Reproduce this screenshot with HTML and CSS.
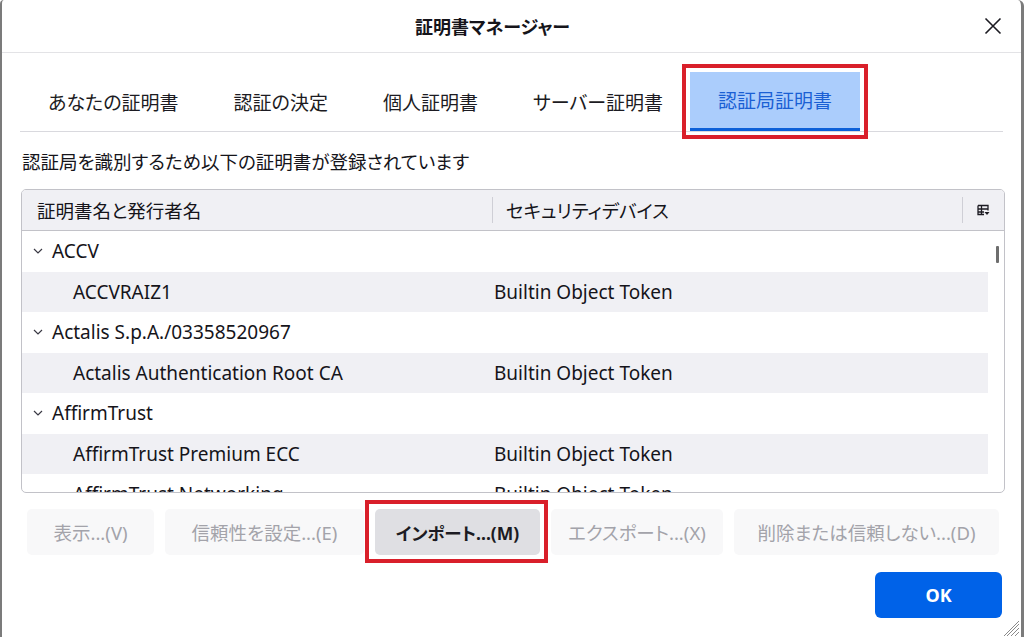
FILE: index.html
```html
<!DOCTYPE html>
<html lang="ja">
<head>
<meta charset="utf-8">
<title>証明書マネージャー</title>
<link rel="stylesheet" href="styles.css">
</head>
<body>
<div class="dialog">
  <header class="titlebar">
    <h1 class="title">証明書マネージャー</h1>
    <button class="close" aria-label="閉じる">
      <svg width="18" height="18" viewBox="0 0 18 18"><path d="M1.5 1.5 L16.5 16.5 M16.5 1.5 L1.5 16.5" stroke="#1c1b22" stroke-width="1.6" fill="none"/></svg>
    </button>
  </header>

  <nav class="tabs">
    <div class="tab">あなたの証明書</div>
    <div class="tab">認証の決定</div>
    <div class="tab">個人証明書</div>
    <div class="tab">サーバー証明書</div>
    <div class="tab selected">認証局証明書</div>
  </nav>

  <p class="desc">認証局を識別するため以下の証明書が登録されています</p>

  <div class="table">
    <div class="thead">
      <div class="th th-name">証明書名と発行者名</div>
      <div class="th th-dev">セキュリティデバイス</div>
      <div class="th th-pick">
        <svg width="13" height="13" viewBox="0 0 13 13"><path d="M1 1.5h10v5M1 1.5v9h6M1 5h10M4.5 1.5v9M1 8h6" stroke="#1c1b22" stroke-width="1.3" fill="none"/><path d="M7.5 8h5l-2.5 3z" fill="#1c1b22"/></svg>
      </div>
    </div>
    <div class="tbody">
      <div class="rows">
        <div class="row group"><span class="chev"><svg width="10" height="6" viewBox="0 0 10 6"><path d="M1 1l4 4 4-4" stroke="#3a3944" stroke-width="1.2" fill="none"/></svg></span><span class="cell-name">ACCV</span></div>
        <div class="row child alt"><span class="cell-name">ACCVRAIZ1</span><span class="cell-dev">Builtin Object Token</span></div>
        <div class="row group"><span class="chev"><svg width="10" height="6" viewBox="0 0 10 6"><path d="M1 1l4 4 4-4" stroke="#3a3944" stroke-width="1.2" fill="none"/></svg></span><span class="cell-name">Actalis S.p.A./03358520967</span></div>
        <div class="row child alt"><span class="cell-name">Actalis Authentication Root CA</span><span class="cell-dev">Builtin Object Token</span></div>
        <div class="row group"><span class="chev"><svg width="10" height="6" viewBox="0 0 10 6"><path d="M1 1l4 4 4-4" stroke="#3a3944" stroke-width="1.2" fill="none"/></svg></span><span class="cell-name">AffirmTrust</span></div>
        <div class="row child alt"><span class="cell-name">AffirmTrust Premium ECC</span><span class="cell-dev">Builtin Object Token</span></div>
        <div class="row child"><span class="cell-name">AffirmTrust Networking</span><span class="cell-dev">Builtin Object Token</span></div>
      </div>
      <div class="scrollbar"><div class="thumb"></div></div>
    </div>
  </div>

  <div class="actions">
    <button class="btn disabled b-view">表示...(V)</button>
    <button class="btn disabled b-trust">信頼性を設定...(E)</button>
    <span class="hl"><button class="btn import">インポート...(M)</button></span>
    <button class="btn disabled b-export">エクスポート...(X)</button>
    <button class="btn disabled b-delete">削除または信頼しない...(D)</button>
  </div>

  <div class="footer">
    <button class="ok">OK</button>
  </div>
  <div class="grip">
    <svg width="16" height="16" viewBox="0 0 16 16"><path d="M15 3L3 15M15 7L7 15M15 11L11 15M15 0L0 15" stroke="#8a8a8a" stroke-width="1" fill="none"/></svg>
  </div>
</div>
</body>
</html>
```

FILE: styles.css
```css
* { box-sizing: border-box; }
html, body {
  margin: 0;
  width: 1024px;
  height: 637px;
  overflow: hidden;
  background: #ffffff;
}
body {
  font-family: "Noto Sans", "Noto Sans CJK JP", sans-serif;
  color: #15141a;
  font-feature-settings: "palt";
}
.dialog {
  position: relative;
  width: 1024px;
  height: 637px;
  background: #fff;
  border-left: 2px solid #7b7b7b;
  border-right: 3px solid #7b7b7b;
  border-top-left-radius: 4px;
  border-top-right-radius: 6px;
  display: flex;
  flex-direction: column;
}
.titlebar {
  height: 53px;
  flex: none;
  display: flex;
  align-items: center;
  justify-content: center;
  padding-right: 38px;
  border-bottom: 1px solid #e3e3e6;
  position: relative;
}
.title {
  margin: 0;
  font-size: 18px;
  font-weight: 700;
}
.close {
  position: absolute;
  right: 18px;
  top: 16px;
  background: none;
  border: 0;
  padding: 0;
  width: 20px;
  height: 20px;
  display: flex;
  align-items: center;
  justify-content: center;
}
.tabs {
  margin: 18px 18px 0 18px;
  display: flex;
  border-bottom: 1px solid #d9d9de;
  height: 61px;
}
.tab {
  padding: 0 27px 0 28px;
  display: flex;
  align-items: center;
  font-size: 19px;
  color: #1c1b22;
  height: 59px;
  margin-top: 1px;
}
.tab.selected {
  background: #abcdfc;
  color: #1a5fd4;
  border-bottom: 3px solid #0d60d8;
  outline: 4px solid #d91f2a;
  outline-offset: 4px;
  padding: 0 28px;
}
.desc {
  margin: 18px 0 0 20px;
  font-size: 18.5px;
  line-height: 24px;
  color: #15141a;
}
.table {
  margin: 15px 16px 0 19px;
  height: 304px;
  border: 1px solid #c2c2c8;
  border-radius: 5px;
  overflow: hidden;
  display: flex;
  flex-direction: column;
}
.thead {
  height: 41px;
  flex: none;
  background: #f0f0f4;
  border-bottom: 1px solid #c2c2c8;
  display: flex;
  align-items: center;
  font-size: 18.5px;
}
.th { display: flex; align-items: center; height: 100%; }
.th-name { width: 470px; padding-left: 15px; }
.th-dev {
  flex: 1;
  padding-left: 13px;
  border-left: 1px solid #cfcfd6;
  height: 26px;
}
.th-pick {
  width: 42px;
  height: 26px;
  border-left: 1px solid #cfcfd6;
  justify-content: center;
}
.tbody {
  flex: 1;
  display: flex;
  min-height: 0;
  overflow: hidden;
}
.rows { flex: 1; }
.row {
  height: 40.5px;
  display: flex;
  align-items: center;
  font-size: 19px;
  color: #15141a;
}
.row.alt { background: #f0f0f4; }
.chev {
  width: 30px;
  padding-left: 11px;
  display: flex;
  align-items: center;
}
.child .cell-name { width: 472px; padding-left: 51px; }
.scrollbar {
  width: 16px;
  flex: none;
  position: relative;
}
.thumb {
  position: absolute;
  left: 8px;
  top: 15px;
  width: 3px;
  height: 17px;
  background: #6e6e6e;
  border-radius: 1px;
}
.actions {
  margin: 16px 0 0 25px;
  display: flex;
  align-items: center;
  gap: 11px;
  height: 46px;
}
.btn {
  height: 46px;
  border: 0;
  border-radius: 5px;
  padding: 0 22px;
  font-family: inherit;
  font-feature-settings: "palt";
  font-size: 18.5px;
  background: #f8f8f9;
  color: #a3a3aa;
  flex: none;
}
.b-view { width: 127px; }
.b-trust { width: 199px; }
.b-export { width: 172px; padding: 0 16px; }
.b-delete { width: 265px; padding: 0 16px; }
.hl {
  display: flex;
  border: 4px solid #d91f2a;
  padding: 5px 4px 4px 6px;
  margin: -9px -8px -8px -10px;
}
.btn.import {
  width: 165px;
  padding: 0;
  background: #dfdfe3;
  color: #1c1b22;
  font-weight: 700;
  font-size: 17.5px;
}
.footer {
  display: flex;
  justify-content: flex-end;
  margin: 17px 19px 0 0;
}
.ok {
  width: 127px;
  height: 46px;
  border: 0;
  border-radius: 6px;
  background: #0062e8;
  color: #fff;
  font-family: inherit;
  font-weight: 700;
  font-size: 18px;
}
.grip {
  position: absolute;
  right: 1px;
  bottom: 1px;
  width: 16px;
  height: 16px;
}
```
